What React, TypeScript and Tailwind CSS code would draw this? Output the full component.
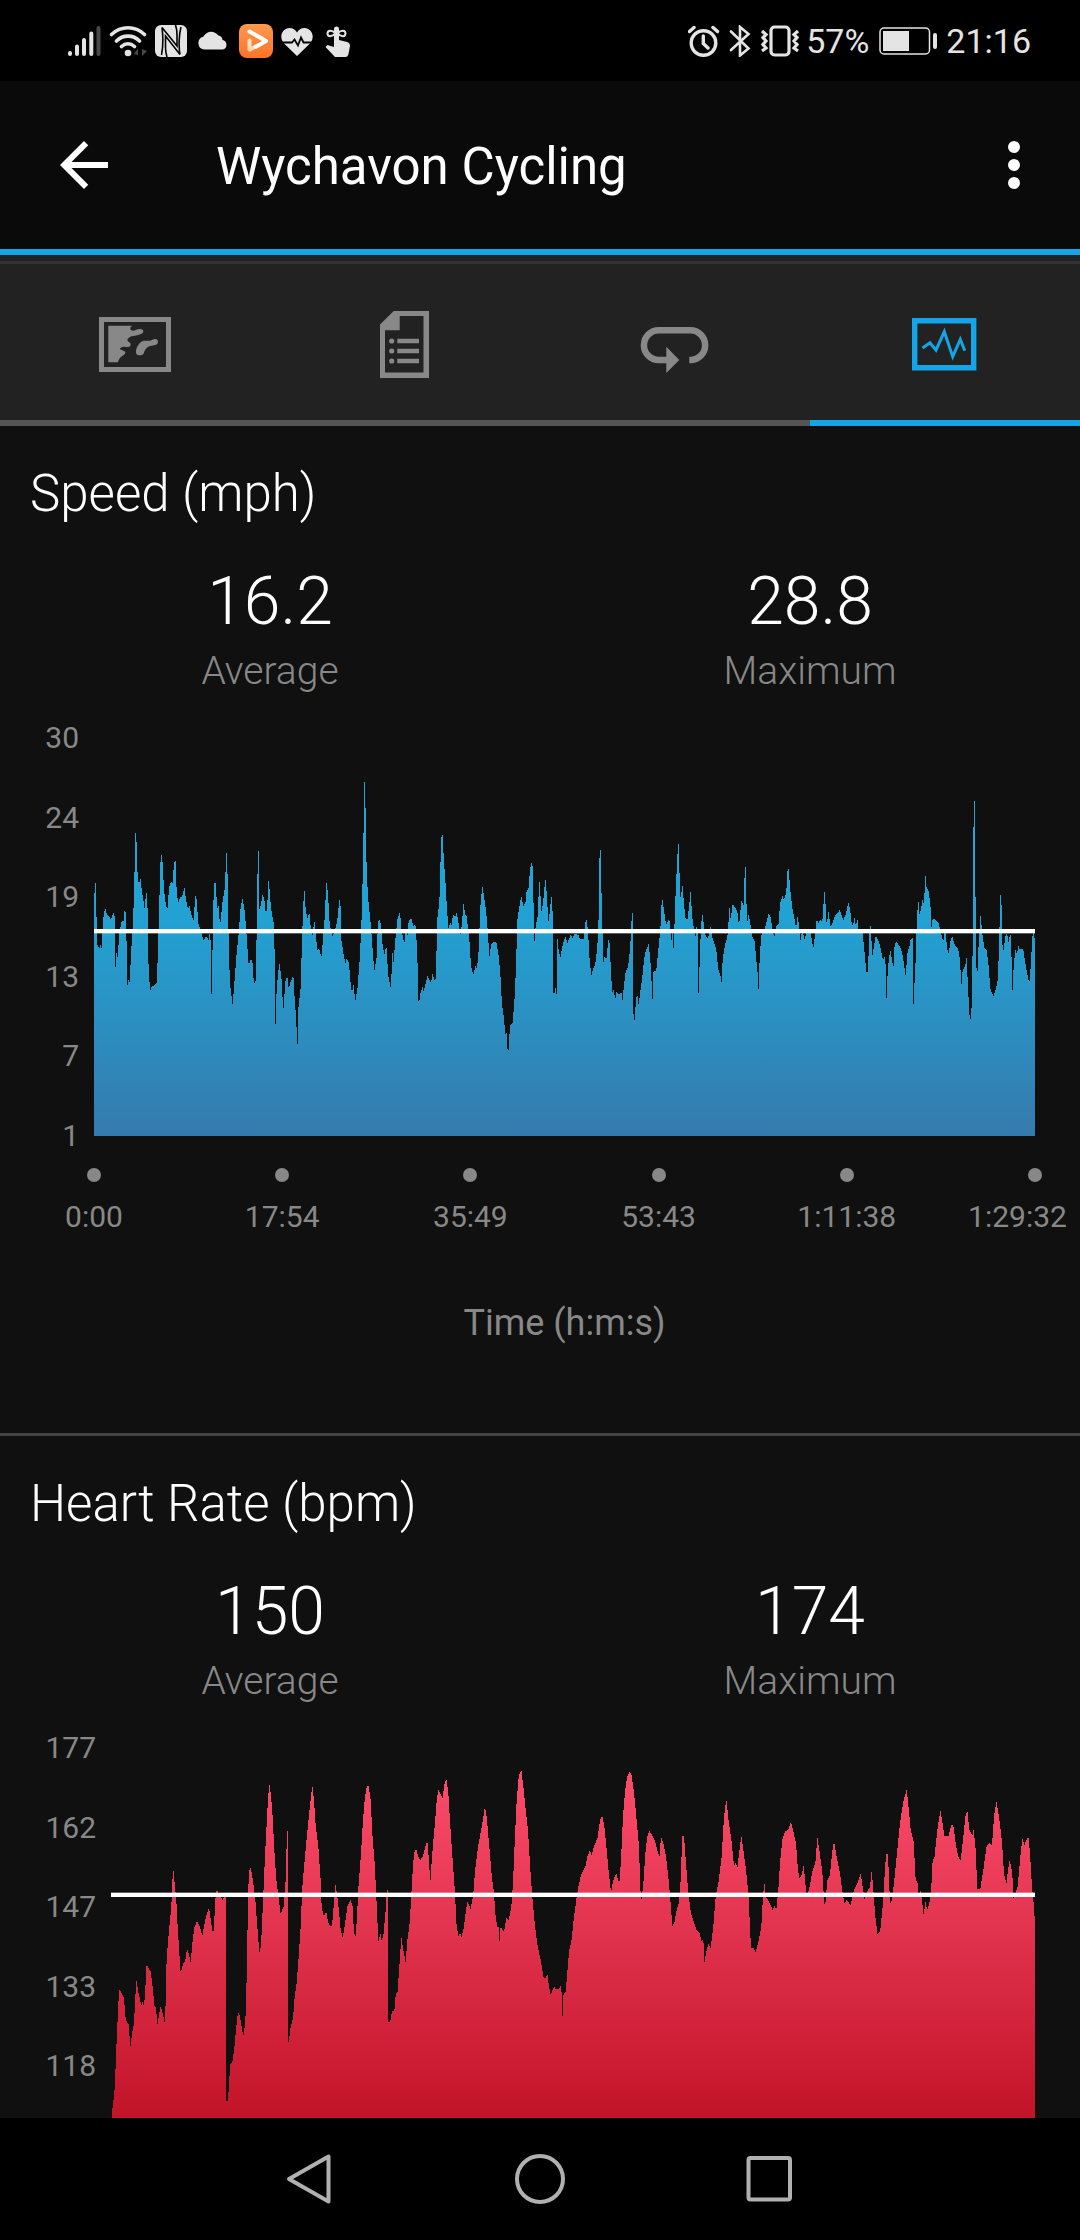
import React, { useId } from "react";

interface ChartProps {
  label: string;
  points: string;
  width: number;
  average: number;
  stops: { offset: string; color: string }[];
}

interface MetricProps {
  title: string;
  average: string;
  maximum: string;
  ticks: string[];
  times?: string[];
  axisClass: string;
  chart: ChartProps;
}

// Plot samples as x,y pairs, three units per pixel, y measured down from the top tick
const speedPoints =
  "0,546 3,383 6,486 10,619 16,631 19,619 22,638 25,592 28,541 33,508 38,528 45,536 51,546 58,522 62,536 64,698 67,642 71,659 76,586 84,546 88,554 92,516 96,526 100,744 104,724 107,734 112,631 116,566 120,476 124,282 127,296 131,416 135,441 139,417 143,454 148,486 152,513 157,456 161,516 164,706 169,758 173,744 182,742 188,736 191,666 195,526 199,378 202,348 206,376 210,456 214,489 220,518 225,449 230,433 236,434 240,373 245,369 248,463 253,494 258,479 265,474 271,447 276,486 282,514 287,504 292,531 299,548 304,471 308,486 313,556 320,576 328,608 336,594 344,606 349,568 352,791 355,666 358,496 363,411 367,471 371,514 374,501 378,568 385,496 393,446 397,333 401,416 405,666 409,744 416,800 421,736 428,646 435,576 439,516 445,480 451,511 456,566 464,683 470,664 475,666 478,719 484,746 487,646 490,431 493,300 496,514 501,498 506,468 511,484 516,534 520,496 524,420 529,486 534,531 539,554 542,646 544,876 547,774 552,706 556,676 562,714 568,819 574,731 580,714 584,752 590,731 598,711 602,781 607,851 610,938 614,791 619,771 623,646 627,516 631,449 635,516 640,541 646,523 650,566 655,594 661,548 665,586 670,638 675,629 682,659 687,606 692,541 697,432 702,466 707,556 715,596 723,576 730,546 736,483 740,506 742,606 748,644 754,678 758,660 765,676 769,726 774,768 778,736 784,791 791,746 797,666 802,566 807,386 811,120 814,181 818,396 822,476 " +
  "825,506 831,566 836,636 841,701 848,656 852,551 856,544 861,561 865,616 871,651 877,621 883,716 891,753 895,636 898,679 905,596 910,546 918,522 922,571 931,619 936,566 940,599 944,549 952,540 958,566 964,558 968,611 971,686 974,809 978,771 985,746 989,759 995,736 1000,714 1006,724 1011,734 1016,706 1024,736 1028,626 1030,541 1036,496 1039,386 1043,286 1046,292 1049,356 1054,426 1058,496 1063,571 1069,553 1073,561 1077,528 1084,536 1088,522 1093,551 1099,591 1104,556 1108,496 1114,532 1118,536 1122,571 1127,616 1131,686 1138,711 1144,684 1149,694 1154,636 1159,506 1165,444 1171,481 1177,526 1182,586 1186,659 1191,621 1198,612 1207,611 1213,646 1219,706 1224,801 1229,834 1234,888 1238,886 1241,942 1244,936 1248,861 1256,854 1262,776 1266,686 1270,546 1276,506 1282,474 1288,504 1294,496 1298,459 1304,449 1308,396 1312,372 1316,386 1319,516 1321,614 1325,566 1331,536 1336,423 1339,466 1343,526 1348,486 1354,420 1359,476 1363,553 1368,516 1372,468 1376,526 1378,764 1382,764 1385,746 1388,773 1390,598 1394,636 1399,659 1405,626 1414,594 1420,616 1430,591 1436,601 1443,586 1453,591 1459,604 1469,604 1473,556 1477,544 1482,576 1486,656 1492,714 1498,691 1504,678 1510,626 1514,536 1516,372 1519,312 1522,442 1525,566 1528,674 1532,656 1537,666 1543,606 1547,616 1551,706 1555,764 1558,754 1564,782 1568,761 1575,769 1582,761 1586,791 1589,749 1595,701 1602,688 1608,636 1612,566 1615,474 1617,666 1619,878 1623,826 1627,778 1631,774 1634,801 1639,761 1645,716 1650,666 1656,636 1664,618 1669,666 1673,736 1676,792 1678,702 1687,696 1693,636 1699,576 1702,506 1705,483 1710,516 1716,561 1726,541 1732,611 1736,581 1739,639 1742,546 1745,461 1750,356 1753,303 1756,391 1760,489 1765,438 1769,486 1774,541 1780,546 1785,506 1790,459 1794,531 1799,566 1804,599 1810,544 1812,666 1814,794 1817,666 1821,566 1825,526 1829,556 " +
  "1834,591 1842,603 1849,564 1854,596 1867,636 1873,696 1879,711 1883,736 1886,666 1892,626 1900,596 1903,561 1906,504 1910,546 1916,498 1926,512 1931,526 1935,566 1942,489 1949,503 1952,406 1954,363 1957,486 1960,551 1964,528 1969,556 1975,596 1982,611 1987,666 1991,706 1994,761 1997,661 2002,591 2011,576 2018,551 2024,526 2031,541 2035,576 2041,596 2047,566 2054,556 2058,496 2066,474 2070,486 2077,461 2080,401 2084,393 2089,456 2095,511 2102,546 2106,571 2111,534 2116,571 2119,611 2125,571 2131,606 2138,581 2146,571 2153,601 2158,633 2164,581 2168,546 2174,556 2178,544 2185,551 2189,491 2192,459 2195,506 2198,561 2204,519 2209,566 2216,554 2224,531 2232,524 2237,516 2242,528 2248,546 2256,526 2263,493 2268,511 2273,556 2277,566 2281,538 2286,566 2290,539 2294,588 2305,568 2309,616 2317,703 2322,701 2326,576 2330,562 2335,654 2340,626 2345,593 2353,606 2359,626 2367,668 2374,651 2377,794 2380,721 2385,656 2390,638 2398,693 2402,619 2408,613 2416,624 2424,641 2431,686 2435,716 2440,646 2446,626 2450,604 2456,601 2458,809 2461,746 2465,666 2469,536 2473,486 2477,534 2482,506 2486,484 2490,501 2494,408 2498,451 2503,454 2509,496 2513,576 2516,541 2524,544 2533,554 2541,586 2548,611 2554,566 2559,631 2564,648 2570,606 2575,594 2582,621 2592,631 2598,666 2602,743 2606,696 2614,684 2617,651 2621,726 2626,826 2629,848 2633,806 2636,626 2639,206 2641,138 2644,432 2647,686 2650,711 2654,616 2659,528 2665,586 2671,631 2678,636 2684,686 2689,751 2698,776 2705,756 2712,721 2716,586 2719,471 2722,478 2725,616 2728,639 2734,596 2739,586 2744,614 2749,581 2753,666 2755,768 2759,686 2764,636 2769,649 2773,621 2777,633 2788,634 2794,676 2803,726 2807,728 2811,671 2815,596 2818,581 2823,606";

const heartPoints =
  "3,1090 5,1076 10,1036 13,976 16,901 19,836 22,766 25,726 29,728 33,738 39,751 43,806 47,822 53,828 58,899 63,856 69,826 72,766 76,696 81,728 86,748 91,773 95,759 98,773 102,746 106,654 110,654 119,671 125,716 130,773 135,778 139,833 144,801 149,774 155,796 161,824 164,766 166,656 170,591 175,536 181,476 184,401 187,363 190,396 196,456 200,536 205,616 209,677 215,651 223,636 228,600 234,618 239,644 244,586 250,538 258,519 267,536 274,564 279,534 285,506 294,477 300,521 305,553 309,546 312,461 317,426 325,438 334,456 341,446 345,446 345,1058 350,1058 354,1016 357,951 364,944 370,901 375,846 381,790 387,806 392,838 397,866 401,836 405,786 409,576 412,416 416,360 420,362 427,406 433,456 439,536 445,614 450,596 455,486 461,346 466,246 471,151 475,106 480,141 485,206 490,306 496,396 503,451 509,498 518,476 524,396 528,249 530,249 531,884 534,881 538,841 546,811 551,746 557,706 563,626 569,536 574,416 581,336 588,261 597,171 604,111 609,156 614,231 622,296 629,396 632,476 638,504 646,492 651,521 657,534 663,534 668,476 673,408 678,436 684,491 689,546 695,568 701,536 709,476 719,456 725,476 729,556 734,566 738,506 743,406 750,316 756,216 762,146 768,113 773,113 779,156 784,256 791,346 796,446 802,581 809,556 812,578 818,556 824,486 828,423 830,426 831,821 838,821 " +
  "843,789 850,789 855,731 859,738 865,656 871,568 877,606 884,643 889,576 896,526 900,456 904,386 909,316 915,301 922,326 928,338 937,321 943,296 949,280 953,326 958,403 963,326 970,246 977,161 982,124 989,138 995,150 1000,111 1006,91 1012,136 1018,236 1025,336 1032,436 1037,536 1042,564 1047,556 1052,567 1059,536 1065,486 1070,461 1079,483 1086,446 1093,361 1102,291 1112,238 1122,175 1127,206 1135,296 1142,381 1149,436 1154,506 1159,536 1163,538 1165,592 1167,545 1170,538 1179,552 1186,511 1193,516 1201,476 1206,406 1211,286 1216,176 1223,86 1231,64 1237,116 1243,176 1251,246 1258,366 1264,446 1272,536 1280,596 1289,636 1298,691 1304,691 1309,678 1314,716 1319,741 1329,716 1335,724 1343,724 1349,712 1353,746 1355,821 1357,741 1364,731 1368,686 1374,611 1381,581 1388,516 1395,461 1402,416 1411,378 1423,356 1429,326 1437,306 1441,324 1449,296 1460,268 1467,216 1474,203 1480,236 1487,306 1494,381 1500,433 1507,396 1516,376 1525,408 1530,336 1536,206 1542,131 1548,88 1555,71 1561,76 1568,126 1576,206 1584,296 1588,426 1592,456 1597,406 1603,316 1609,266 1615,249 1623,261 1633,282 1641,316 1646,326 1650,264 1657,286 1665,326 1673,396 1679,466 1684,534 1690,526 1696,491 1703,466 1709,396 1714,264 1719,266 1725,346 1732,436 1740,496 1749,522 1757,549 1765,553 1772,581 1777,571 1780,644 1785,616 1792,586 1799,600 1807,536 1814,446 " +
  "1822,406 1832,326 1839,206 1846,153 1853,221 1862,281 1869,356 1874,344 1879,360 1885,311 1891,264 1897,306 1905,366 1912,436 1917,536 1920,600 1929,600 1933,614 1941,586 1951,536 1956,446 1960,403 1964,446 1974,461 1985,486 1991,472 1996,486 2002,426 2007,346 2014,276 2023,249 2032,246 2040,222 2047,251 2055,286 2061,366 2066,391 2072,381 2078,351 2083,406 2088,446 2096,416 2105,366 2113,346 2119,268 2125,306 2134,371 2140,469 2143,469 2149,396 2157,381 2163,316 2169,279 2176,321 2187,376 2195,436 2201,468 2207,456 2219,472 2229,426 2239,406 2249,376 2255,416 2261,456 2269,431 2277,416 2282,367 2287,426 2293,506 2300,561 2308,546 2315,476 2320,396 2325,319 2331,319 2335,416 2337,469 2343,456 2350,396 2359,306 2367,226 2377,161 2387,124 2393,181 2399,246 2408,281 2414,396 2421,406 2423,453 2429,426 2434,466 2438,503 2444,459 2448,487 2455,466 2461,416 2465,336 2470,331 2479,246 2488,186 2494,221 2500,264 2513,264 2520,232 2527,232 2534,286 2541,324 2549,338 2556,276 2563,206 2569,186 2575,246 2584,264 2588,244 2594,306 2599,423 2608,423 2617,366 2626,298 2635,283 2643,293 2649,206 2656,159 2664,206 2673,281 2679,376 2686,408 2691,366 2696,336 2704,376 2707,450 2713,436 2720,416 2727,336 2734,270 2740,291 2745,279 2752,266 2757,316 2763,416 2768,466 2772,528";

const PLOT_HEIGHT = 1194;

const StatusBar: React.FC = () => (
  <div className="flex h-[81px] shrink-0 items-center justify-between bg-black pl-[67px] pr-[49px] text-[34px] leading-10 text-[#e4e4e4]">
    <div className="flex items-center gap-2">
      {/* Signal */}
      <svg width="34" height="32" viewBox="0 0 34 32" strokeWidth="4" strokeLinecap="round" stroke="#e4e4e4">
        <path d="M3 28v1M10 21.500v7.500M17 15v14M24.300 8.500v20.500" />
        <path d="M31.500 3v26" stroke="#484848" />
      </svg>
      {/* Wifi */}
      <svg width="38" height="32" viewBox="0 0 38 32" fill="none" stroke="#e4e4e4" strokeWidth="3.600" strokeLinecap="round">
        <path d="M2.500 9.500C12 .5 26 .5 35.500 9.500M7.500 16C14 9.500 24 9.500 30.500 16M12.500 21.500c4-3.500 9-3.500 13 0" />
        <circle cx="19" cy="28" r="3.300" fill="#e4e4e4" stroke="none" />
        <path d="M25 28.500l4-5v7zM38 26l-5 5v-7z" fill="#484848" stroke="none" />
      </svg>
      {/* NFC */}
      <svg width="32" height="32" viewBox="0 0 32 32">
        <rect width="32" height="32" rx="6" fill="#e4e4e4" />
        <path d="M7 2.500L22 21V9.500C22 6 21.500 3 20.500 0M25 29.500L10.500 11v11.500c0 4 .5 6.500 1.500 9.500M7 2.500C8 10 8 22 6.500 30M25 29.500C23.500 22 24 9 26 2" fill="none" stroke="#000" strokeWidth="1.600" />
      </svg>
      {/* Cloud */}
      <svg width="36" height="32" viewBox="0 0 36 32" fill="#e4e4e4">
        <path d="M9 24.500a6.500 6.500 0 0 1-.8-12.700A9 9 0 0 1 23.500 10.500a5 5 0 0 1 4 4.500 4.900 4.900 0 0 1 .5 9.500z" />
      </svg>
      {/* Video */}
      <svg width="34" height="34" viewBox="0 0 34 34">
        <defs>
          <linearGradient id="video" x1="0" y1="0" x2="0" y2="1">
            <stop offset="0" stopColor="#ff9a50" />
            <stop offset="1" stopColor="#fb7328" />
          </linearGradient>
        </defs>
        <rect width="34" height="34" rx="8" fill="url(#video)" />
        <path d="M10.500 16.500v9" stroke="#ffe2c0" strokeWidth="4" strokeLinecap="round" />
        <path d="M11 25.500l5.500-3" stroke="#ffd3a4" strokeWidth="4" strokeLinecap="round" />
        <path d="M10.500 7.500L27 17l-10.500 6" fill="none" stroke="#fff" strokeWidth="4" strokeLinecap="round" strokeLinejoin="round" />
      </svg>
      {/* Heart */}
      <svg width="34" height="32" viewBox="0 0 34 32">
        <path d="M16 31L3 18.500C-3 11 2 3 8.500 3c3.500 0 6 2 7.500 4.500C17.500 5 20 3 23.500 3 30 3 35 11 29 18.500z" fill="#e4e4e4" />
        <path d="M0 17.500h11l2.500-3 3.500 6 3-8 2.500 5H33" fill="none" stroke="#000" strokeWidth="1.800" />
      </svg>
      {/* Touch */}
      <svg width="32" height="32" viewBox="0 0 32 32">
        <path d="M11 4a2.500 2.500 0 0 1 5 0v11l8 2c2 .5 3 2 3 4l-1.500 8c-.5 2-1.500 3-3 3H12L2.500 22l2-2 6.500 2z" fill="#e4e4e4" />
        <path d="M12.500 8.500C9 4.500 4.500 5 4.500 8.500s4.500 3.500 8 0zM14.500 8.500c3.500-4 8-3.500 8 0s-4.500 3.500-8 0z" fill="none" stroke="#e4e4e4" strokeWidth="2" />
      </svg>
    </div>

    <div className="flex items-center gap-2">
      {/* Alarm */}
      <svg width="33" height="32" viewBox="0 0 33 32" fill="none" stroke="#e4e4e4" strokeWidth="3.400" strokeLinecap="round">
        <circle cx="15.500" cy="18" r="12.300" />
        <path d="M15.300 11v7.500l4.700 4.500M1.500 6.500L6 2.500M29.500 6.500L25 2.500" />
      </svg>
      {/* Bluetooth */}
      <svg width="23" height="32" viewBox="0 0 23 32" fill="none" stroke="#e4e4e4" strokeWidth="2.600" strokeLinecap="round">
        <path d="M2 6.500l17.500 17-8.500 7V2l8.500 7L2 25" />
      </svg>
      <div className="flex items-center gap-1 pr-0.5">
        {/* Vibrate */}
        <svg width="42" height="32" viewBox="0 0 42 32" fill="none" stroke="#e4e4e4" strokeWidth="3.200">
          <rect x="11" y="2" width="18" height="28" rx="3.500" />
          <path d="M2 6l4 3.500-3 3L6 16l-3 3.500 3 3.500-4 3M38 6l-4 3.500 3 3-3 3.500 3 3.500-3 3.500 4 3" />
        </svg>
        <span>57%</span>
      </div>
      {/* Battery */}
      <svg width="59" height="28" viewBox="0 0 59 28">
        <rect x="1" y="1" width="49.500" height="26" rx="4" fill="none" stroke="#e4e4e4" strokeWidth="1.500" />
        <path d="M4 4h26v20H4z" fill="#e4e4e4" />
        <rect x="54" y="6" width="4" height="16" rx="2" fill="#e4e4e4" />
      </svg>
      <span>21:16</span>
    </div>
  </div>
);

const Header: React.FC = () => (
  <header className="flex h-[174px] shrink-0 items-center border-b-6 border-[#14a5e8] bg-[#0a0a0a] pl-12 pr-[30px]">
    <button type="button" aria-label="Back">
      <svg className="size-[72px]" viewBox="0 0 24 24" fill="#fff">
        <path d="M20 11H7.830l5.590-5.590L12 4l-8 8 8 8 1.410-1.410L7.830 13H20z" />
      </svg>
    </button>
    <h1 className="ml-24 flex-1 pt-1 text-[51px] leading-[60px] text-white">Wychavon Cycling</h1>
    <button type="button" aria-label="More options">
      <svg className="size-[72px]" viewBox="0 0 24 24" fill="#fff">
        <circle cx="12" cy="6" r="2" />
        <circle cx="12" cy="12" r="2" />
        <circle cx="12" cy="18" r="2" />
      </svg>
    </button>
  </header>
);

const tabs = [
  {
    name: "Map",
    icon: (
      <>
        <path d="M2.500 10.500h67v50h-67z" fill="none" stroke="currentColor" strokeWidth="5" />
        <path d="M9.300 16.700h24c-1.500 1-2 1.800-2 2.600 0 1.500 1 2.400 2.400 2.400 2.500 0 4.800-1.700 7.300-1.700 2 0 3.300.8 3.300 2s-.3 2.200-1.600 2.700c-2.200.9-4.500 1.500-6.700 2-2.500.2-4.500.6-6 2-1.500 1.200-2 2-1.300 3 .8 1.600 3 2 3 3.600 0 1.500-.9 2.700-2.400 2.700-2.300 0-4.600-.8-6.600.3-1.500.6-2 1.300-1.400 2 1.200 1.400 5 1.300 5 3 0 1.500-.9 2.200-2 3-1.700 1.200-3 2-4 3.700-.7 1-1 2-1.300 3.300H9.300z" />
        <path d="M37 42.700c0-2.500.8-4.700 2.300-6.700 1.200-1.800 2.700-3.200 4.400-4 2.300-.5 4.800 0 7.300-.300 1.800-.3 3.200-1.700 5-1.700s3 1.200 3 2.700-.6 2.400-2 3c-2.500 1-5.400.8-7.700 2-2 1.200-3.300 3-4 5-.5 2-1.200 3-2.600 3.300-1.600.4-3 .5-4.400-.3-1-.6-1.300-1.700-1.300-3z" />
      </>
    ),
  },
  {
    name: "Details",
    icon: (
      <>
        <path fillRule="evenodd" d="M24.700 2H60v67H11V15.500zM30.700 7v14.300H16V63.500h38.500V7z" />
        <circle cx="22.700" cy="32" r="2.600" />
        <circle cx="22.700" cy="42" r="2.600" />
        <circle cx="22.700" cy="52" r="2.600" />
        <path d="M28.300 29.700H50v4.600H28.300zM28.300 39.700H50v4.600H28.300zM28.300 49.700H50v4.600H28.300z" />
      </>
    ),
  },
  {
    name: "Laps",
    icon: (
      <>
        <path d="M50.300 51h1a14.850 14.850 0 0 0 0-29.700H19.800a14.850 14.850 0 0 0 0 29.700H28" fill="none" stroke="currentColor" strokeWidth="6.500" />
        <path d="M27.300 37.700L40.300 51l-13 13z" />
      </>
    ),
  },
  {
    name: "Charts",
    icon: (
      <g fill="none" stroke="currentColor">
        <path d="M5.700 11.700h59v47h-59z" strokeWidth="5.400" />
        <path d="M13.500 39l7.500-5.300 6 7.500 8.300-18.500 8.400 25 7.600-17.400 4.500 11.400" strokeWidth="3" />
      </g>
    ),
  },
];

const TabBar: React.FC = () => (
  <nav className="mt-1.5 grid shrink-0 grid-cols-4 border-t-3 border-[#333333]">
    {tabs.map((tab, index) => (
      <button
        key={tab.name}
        type="button"
        aria-label={tab.name}
        className={
          index === 3
            ? "flex h-[162px] items-center justify-center border-b-6 border-[#14a5e8] pt-1.5 text-[#14a5e8]"
            : "flex h-[162px] items-center justify-center border-b-6 border-[#555555] pt-1.5 text-[#888888]"
        }
      >
        <svg className="size-[72px]" viewBox="0 0 72 72" fill="currentColor">
          {tab.icon}
        </svg>
      </button>
    ))}
  </nav>
);

const AreaChart: React.FC<ChartProps> = ({ label, points, width, average, stops }) => {
  const fillId = useId();

  return (
    <svg
      className="h-[398px] w-full"
      viewBox={`0 0 ${width} ${PLOT_HEIGHT}`}
      preserveAspectRatio="none"
      role="img"
      aria-label={label}
    >
      <defs>
        <linearGradient id={fillId} gradientUnits="userSpaceOnUse" x1="0" y1="0" x2="0" y2={PLOT_HEIGHT}>
          {stops.map((stop) => (
            <stop key={stop.offset} offset={stop.offset} stopColor={stop.color} />
          ))}
        </linearGradient>
      </defs>
      <polygon
        points={`0,${PLOT_HEIGHT} ${points} ${width},${PLOT_HEIGHT}`}
        fill={`url(#${fillId})`}
        shapeRendering="crispEdges"
      />
      <rect x="0" y={average - 6} width={width} height="13" fill="#fff" />
    </svg>
  );
};

const Stat: React.FC<{ value: string; name: string }> = ({ value, name }) => (
  <div className="flex flex-col items-center font-light">
    <span className="text-[66px] leading-20 text-white">{value}</span>
    <span className="text-[39px] leading-[58px] text-[#888888]">{name}</span>
  </div>
);

const Metric: React.FC<MetricProps> = ({
  title,
  average,
  maximum,
  ticks,
  times,
  axisClass,
  chart,
}) => (
  <section className="border-b-3 border-[#444444] pb-[88px] pt-[38px]">
    <h2 className="pl-[30px] text-[51px] font-light leading-[60px] text-white">{title}</h2>

    <div className="mt-[38px] grid grid-cols-2">
      <Stat value={average} name="Average" />
      <Stat value={maximum} name="Maximum" />
    </div>

    {/* Plot with value axis */}
    <div className="mt-[18px] flex pr-[45px] text-[30px] text-[#888888]">
      <div className={axisClass}>
        {ticks.map((tick) => (
          <span key={tick} className="h-10">
            {tick}
          </span>
        ))}
      </div>
      <div className="min-w-0 flex-1 py-5">
        <AreaChart {...chart} />
      </div>
    </div>

    {/* Time axis */}
    {times && (
      <div className="pl-[94px] pr-[45px] pt-3 text-[#888888]">
        <div className="flex justify-between text-[30px] leading-10">
          {times.map((time) => (
            <div key={time} className="group flex w-0 flex-col items-center gap-[15px]">
              <span className="size-3.5 shrink-0 rounded-full bg-[#888888]"></span>
              <span className="whitespace-nowrap group-last:-mr-8 group-last:self-end">{time}</span>
            </div>
          ))}
        </div>
        <p className="mt-16 text-center text-[36px] leading-[44px]">Time (h:m:s)</p>
      </div>
    )}
  </section>
);

const BottomNav: React.FC = () => (
  <nav className="flex h-[122px] shrink-0 items-center justify-center bg-black text-[#b0b0b0]">
    <button type="button" aria-label="Back" className="flex w-[230px] justify-center">
      <svg className="size-[54px]" viewBox="0 0 54 54" fill="none" stroke="currentColor" strokeWidth="4" strokeLinejoin="round">
        <path d="M45.500 4.500v45L6 27z" />
      </svg>
    </button>
    <button type="button" aria-label="Home" className="flex w-[230px] justify-center">
      <svg className="size-[54px]" viewBox="0 0 54 54" fill="none" stroke="currentColor" strokeWidth="4">
        <circle cx="27" cy="27" r="23" />
      </svg>
    </button>
    <button type="button" aria-label="Recent apps" className="flex w-[230px] justify-center">
      <svg className="size-[54px]" viewBox="0 0 54 54" fill="none" stroke="currentColor" strokeWidth="4">
        <rect x="5.500" y="6" width="41.500" height="41.500" rx="2" />
      </svg>
    </button>
  </nav>
);

const App: React.FC = () => {
  return (
    <div className="flex h-screen flex-col bg-[#222222] font-['Roboto',sans-serif]">
      <StatusBar />
      <Header />
      <TabBar />
      <main className="min-h-0 flex-1 overflow-y-auto bg-[#101010] [scrollbar-width:none]">
        <Metric
          title="Speed (mph)"
          average="16.2"
          maximum="28.8"
          ticks={["30", "24", "19", "13", "7", "1"]}
          times={["0:00", "17:54", "35:49", "53:43", "1:11:38", "1:29:32"]}
          axisClass="flex w-[94px] flex-col justify-between pr-[15px] text-right leading-10"
          chart={{
            label: "Speed over time",
            points: speedPoints,
            width: 2823,
            average: 579,
            stops: [
              { offset: "0", color: "#22a9db" },
              { offset: "0.45", color: "#22a2d3" },
              { offset: "1", color: "#367aad" },
            ],
          }}
        />
        <Metric
          title="Heart Rate (bpm)"
          average="150"
          maximum="174"
          ticks={["177", "162", "147", "133", "118", ""]}
          axisClass="flex w-[111px] flex-col justify-between pr-[15px] text-right leading-10"
          chart={{
            label: "Heart rate over time",
            points: heartPoints,
            width: 2772,
            average: 440,
            stops: [
              { offset: "0", color: "#ff5070" },
              { offset: "0.45", color: "#e2334f" },
              { offset: "1", color: "#bd0f22" },
            ],
          }}
        />
      </main>
      <BottomNav />
    </div>
  );
};

export default App;
